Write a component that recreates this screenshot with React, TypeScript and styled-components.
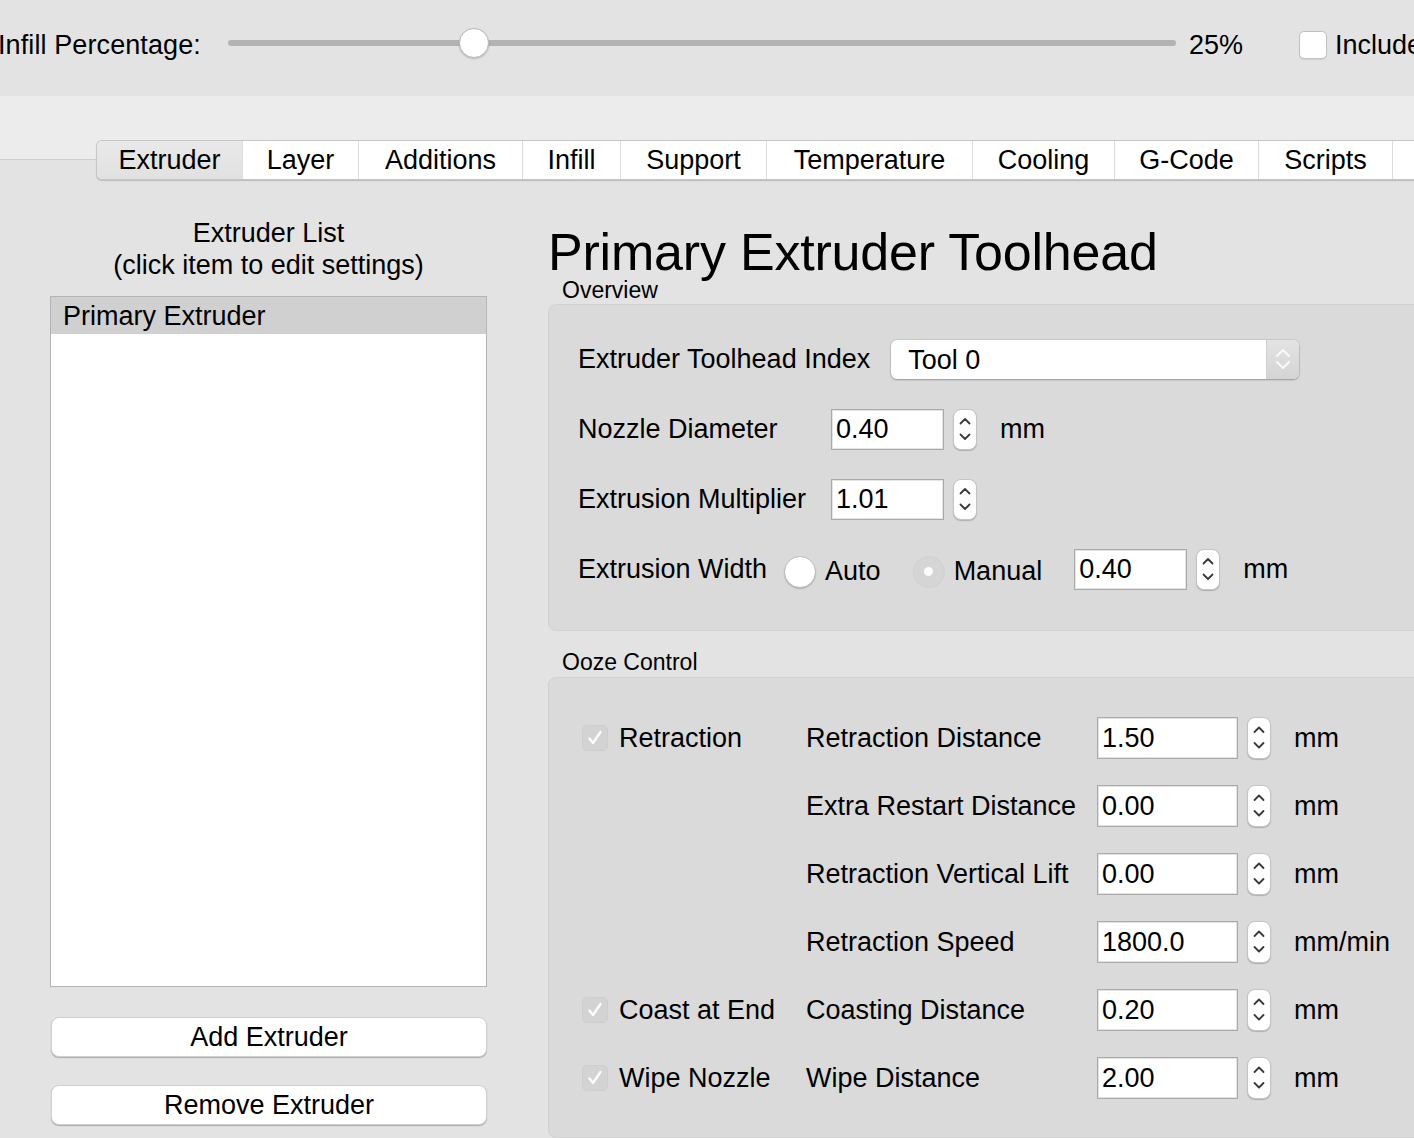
import styled, { createGlobalStyle } from "styled-components";

const GlobalCSS = createGlobalStyle`
  html, body {
    margin: 0;
    padding: 0;
    background: #e3e3e3;
  }
  body {
    font-family: "Liberation Sans", Arial, sans-serif;
    color: #000;
  }
  * {
    box-sizing: border-box;
  }
`;

const Window = styled.div`
  width: 1414px;
  height: 1138px;
  overflow: hidden;
  background: #e3e3e3;
  display: flex;
  flex-direction: column;
`;

/* ---------- top strip ---------- */

const TopBar = styled.div`
  height: 96px;
  flex-shrink: 0;
  display: flex;
  align-items: center;
  padding-bottom: 6px;
  font-size: 27px;
  white-space: nowrap;
`;

const InfillLabel = styled.span`
  margin-left: -2px;
  letter-spacing: 0.1px;
`;

const SliderTrack = styled.div`
  position: relative;
  flex-shrink: 0;
  width: 948px;
  height: 6px;
  margin-left: 27px;
  margin-top: -4px;
  border-radius: 3px;
  background: #b3b3b3;
`;

const SliderKnob = styled.div<{ $at: number }>`
  position: absolute;
  top: 50%;
  left: ${({ $at }) => $at}%;
  width: 30px;
  height: 30px;
  border-radius: 50%;
  background: #fff;
  border: 1px solid #bababa;
  box-shadow: 0 1px 2px rgba(0, 0, 0, 0.2);
  transform: translate(-50%, -50%);
`;

const Percent = styled.span`
  margin-left: 13px;
`;

const TopCheck = styled.span`
  flex-shrink: 0;
  width: 28px;
  height: 28px;
  margin-left: 56px;
  border-radius: 5px;
  background: #fff;
  border: 1px solid #c0c0c0;
  box-shadow: 0 1px 1px rgba(0, 0, 0, 0.08);
`;

const TopCheckLabel = styled.span`
  margin-left: 8px;
`;

/* ---------- tabs ---------- */

const Band = styled.div`
  height: 64px;
  flex-shrink: 0;
  background: #ececec;
  border-bottom: 1px solid #cfcfcf;
`;

const TabBar = styled.div`
  align-self: flex-start;
  flex-shrink: 0;
  display: flex;
  height: 40px;
  margin-top: -20px;
  margin-left: 96px;
  background: #fff;
  border: 1px solid #c6c6c6;
  border-right: none;
  border-radius: 6px 0 0 6px;
  box-shadow: 0 1px 1px rgba(0, 0, 0, 0.18);
  overflow: hidden;
`;

const Tab = styled.div<{ $w: number; $active?: boolean }>`
  width: ${({ $w }) => $w}px;
  flex-shrink: 0;
  display: flex;
  align-items: center;
  justify-content: center;
  font-size: 27px;
  white-space: nowrap;
  border-right: 1px solid #dcdcdc;
  background: ${({ $active }) =>
    $active ? "linear-gradient(#e9e9e9, #e1e1e1)" : "#fff"};
`;

/* ---------- body ---------- */

const Body = styled.div`
  flex: 1;
  min-height: 0;
  display: flex;
`;

const LeftColumn = styled.div`
  width: 437px;
  flex-shrink: 0;
  margin-left: 50px;
  padding-top: 37px;
  display: flex;
  flex-direction: column;
`;

const ListCaption = styled.div`
  text-align: center;
  font-size: 27px;
  line-height: 32px;
`;

const ListBox = styled.div`
  height: 691px;
  margin-top: 15px;
  background: #fff;
  border: 1px solid #b4b4b4;
`;

const ListItem = styled.div<{ $selected?: boolean }>`
  height: 37px;
  padding-left: 12px;
  font-size: 27px;
  line-height: 39px;
  background: ${({ $selected }) => ($selected ? "#d0d0d0" : "transparent")};
`;

const PushButton = styled.div<{ $gap: number }>`
  height: 40px;
  margin-top: ${({ $gap }) => $gap}px;
  margin-left: 1px;
  display: flex;
  align-items: center;
  justify-content: center;
  font-size: 27px;
  background: #fff;
  border-radius: 8px;
  border: 1px solid #d0d0d0;
  box-shadow: 0 1px 1px rgba(0, 0, 0, 0.25);
`;

const RightColumn = styled.div`
  flex: 1;
  min-width: 0;
  margin-left: 61px;
  padding-top: 44px;
  display: flex;
  flex-direction: column;
`;

const Title = styled.h1`
  margin: 0;
  font-size: 52px;
  font-weight: normal;
  line-height: 56px;
  white-space: nowrap;
  letter-spacing: -0.2px;
`;

const GroupLabel = styled.div<{ $top: number }>`
  margin-top: ${({ $top }) => $top}px;
  margin-left: 14px;
  font-size: 23px;
  line-height: 20px;
`;

const GroupBox = styled.div<{ $top: number }>`
  width: 920px;
  margin-top: ${({ $top }) => $top}px;
  background: #dadada;
  border: 1px solid #d2d2d2;
  border-radius: 8px;
`;

const OverviewBox = styled(GroupBox)`
  display: flex;
  flex-direction: column;
  gap: 30px;
  padding: 34px 0 41px 29px;
`;

const FormRow = styled.div`
  display: flex;
  align-items: center;
  height: 40px;
  font-size: 27px;
  white-space: nowrap;
`;

const FieldLabel = styled.span<{ $w?: number }>`
  flex-shrink: 0;
  ${({ $w }) => ($w ? `width: ${$w}px;` : "")}
`;

const ComboBox = styled.div`
  display: flex;
  width: 408px;
  height: 39px;
  margin-left: 21px;
  background: #fff;
  border-radius: 6px;
  box-shadow: 0 0 0 1px rgba(0, 0, 0, 0.07), 0 1px 2px rgba(0, 0, 0, 0.25);
`;

const ComboText = styled.span`
  flex: 1;
  display: flex;
  align-items: center;
  padding-left: 17px;
  padding-top: 3px;
  font-size: 27px;
`;

const ComboArrows = styled.span`
  width: 33px;
  display: flex;
  align-items: center;
  justify-content: center;
  background: linear-gradient(#e3e3e3, #d4d4d4);
  border-left: 1px solid #d0d0d0;
  border-radius: 0 6px 6px 0;
`;

const SpinWrap = styled.span<{ $left?: number }>`
  display: flex;
  align-items: center;
  margin-left: ${({ $left }) => $left ?? 0}px;
`;

const SpinField = styled.span<{ $w: number; $h: number }>`
  width: ${({ $w }) => $w}px;
  height: ${({ $h }) => $h}px;
  display: flex;
  align-items: center;
  padding-left: 4px;
  font-size: 27px;
  background: #fff;
  border: 1px solid #a9a9a9;
  box-shadow: inset 0 0 0 1px #e4e4e4;
`;

const Stepper = styled.span<{ $h: number }>`
  width: 24px;
  height: ${({ $h }) => $h}px;
  margin-left: 9px;
  display: flex;
  background: #fff;
  border: 1px solid #c4c4c4;
  border-radius: 8px;
  box-shadow: 0 1px 1px rgba(0, 0, 0, 0.2);
`;

const Unit = styled.span`
  margin-left: 23px;
  font-size: 27px;
  white-space: nowrap;
`;

const Radio = styled.span<{ $left: number; $disabled?: boolean }>`
  flex-shrink: 0;
  width: 32px;
  height: 32px;
  margin-left: ${({ $left }) => $left}px;
  margin-top: 5px;
  display: flex;
  align-items: center;
  justify-content: center;
  border-radius: 50%;
  background: ${({ $disabled }) => ($disabled ? "#d5d5d5" : "#fff")};
  border: 1px solid ${({ $disabled }) => ($disabled ? "#d1d1d1" : "#bdbdbd")};
  box-shadow: ${({ $disabled }) =>
    $disabled ? "none" : "0 1px 1px rgba(0, 0, 0, 0.2)"};
`;

const RadioDot = styled.span`
  width: 9px;
  height: 9px;
  border-radius: 50%;
  background: #fbfbfb;
`;

const RadioLabel = styled.span`
  margin-left: 9px;
  margin-top: 5px;
`;

const OozeBox = styled(GroupBox)`
  flex: 1;
  display: grid;
  grid-template-columns: 224px 291px max-content max-content;
  justify-content: start;
  grid-auto-rows: 42px;
  row-gap: 26px;
  align-items: center;
  align-content: start;
  padding: 39px 0 0 33px;
  font-size: 27px;
  white-space: nowrap;
`;

const CheckCell = styled.span`
  display: flex;
  align-items: center;
`;

const DisabledCheck = styled.span`
  width: 26px;
  height: 26px;
  display: flex;
  border-radius: 5px;
  background: #d3d3d3;
  border: 1px solid #cecece;
`;

const CheckLabel = styled.span`
  margin-left: 11px;
`;

/* ---------- small drawings ---------- */

const StepArrows = ({ h }: { h: number }) => (
  <svg width="22" height={h - 2} viewBox={`0 0 22 ${h - 2}`}>
    <polyline
      points={`6.5,${h / 2 - 7} 11,${h / 2 - 11.5} 15.5,${h / 2 - 7}`}
      fill="none"
      stroke="#3a3a3a"
      strokeWidth="1.8"
      strokeLinecap="round"
      strokeLinejoin="round"
    />
    <polyline
      points={`6.5,${h / 2 + 4} 11,${h / 2 + 8.5} 15.5,${h / 2 + 4}`}
      fill="none"
      stroke="#3a3a3a"
      strokeWidth="1.8"
      strokeLinecap="round"
      strokeLinejoin="round"
    />
  </svg>
);

const ComboChevrons = () => (
  <svg width="20" height="28" viewBox="0 0 20 28">
    <polyline
      points="4,11 10,5 16,11"
      fill="none"
      stroke="#fafafa"
      strokeWidth="2"
      strokeLinecap="round"
      strokeLinejoin="round"
    />
    <polyline
      points="4,17 10,23 16,17"
      fill="none"
      stroke="#fafafa"
      strokeWidth="2"
      strokeLinecap="round"
      strokeLinejoin="round"
    />
  </svg>
);

const CheckMark = () => (
  <svg width="24" height="24" viewBox="0 0 24 24">
    <path
      d="M6.5 12.5 L10 17 L17.5 6"
      fill="none"
      stroke="#fdfdfd"
      strokeWidth="2.4"
      strokeLinecap="round"
      strokeLinejoin="round"
    />
  </svg>
);

const SpinBox = ({
  value,
  w,
  h,
  left,
}: {
  value: string;
  w: number;
  h: number;
  left?: number;
}) => (
  <SpinWrap $left={left}>
    <SpinField $w={w} $h={h}>
      {value}
    </SpinField>
    <Stepper $h={h}>
      <StepArrows h={h} />
    </Stepper>
  </SpinWrap>
);

/* ---------- data ---------- */

const tabs = [
  { name: "Extruder", w: 146 },
  { name: "Layer", w: 116 },
  { name: "Additions", w: 164 },
  { name: "Infill", w: 98 },
  { name: "Support", w: 146 },
  { name: "Temperature", w: 206 },
  { name: "Cooling", w: 142 },
  { name: "G-Code", w: 144 },
  { name: "Scripts", w: 134 },
  { name: "Speeds", w: 170 },
];

const oozeRows = [
  { check: "Retraction", label: "Retraction Distance", value: "1.50", unit: "mm" },
  { label: "Extra Restart Distance", value: "0.00", unit: "mm" },
  { label: "Retraction Vertical Lift", value: "0.00", unit: "mm" },
  { label: "Retraction Speed", value: "1800.0", unit: "mm/min" },
  { check: "Coast at End", label: "Coasting Distance", value: "0.20", unit: "mm" },
  { check: "Wipe Nozzle", label: "Wipe Distance", value: "2.00", unit: "mm" },
];

export default function App() {
  return (
    <>
      <GlobalCSS />
      <Window>
        <TopBar>
          <InfillLabel>Infill Percentage:</InfillLabel>
          <SliderTrack>
            <SliderKnob $at={26} />
          </SliderTrack>
          <Percent>25%</Percent>
          <TopCheck />
          <TopCheckLabel>Include solid diaphragm every</TopCheckLabel>
        </TopBar>

        <Band />
        <TabBar>
          {tabs.map((t, i) => (
            <Tab key={t.name} $w={t.w} $active={i === 0}>
              {t.name}
            </Tab>
          ))}
        </TabBar>

        <Body>
          <LeftColumn>
            <ListCaption>
              Extruder List
              <br />
              (click item to edit settings)
            </ListCaption>
            <ListBox>
              <ListItem $selected>Primary Extruder</ListItem>
            </ListBox>
            <PushButton $gap={30}>Add Extruder</PushButton>
            <PushButton $gap={28}>Remove Extruder</PushButton>
          </LeftColumn>

          <RightColumn>
            <Title>Primary Extruder Toolhead</Title>
            <GroupLabel $top={0}>Overview</GroupLabel>
            <OverviewBox $top={4}>
              <FormRow>
                <FieldLabel>Extruder Toolhead Index</FieldLabel>
                <ComboBox>
                  <ComboText>Tool 0</ComboText>
                  <ComboArrows>
                    <ComboChevrons />
                  </ComboArrows>
                </ComboBox>
              </FormRow>
              <FormRow>
                <FieldLabel $w={253}>Nozzle Diameter</FieldLabel>
                <SpinBox value="0.40" w={113} h={41} />
                <Unit>mm</Unit>
              </FormRow>
              <FormRow>
                <FieldLabel $w={253}>Extrusion Multiplier</FieldLabel>
                <SpinBox value="1.01" w={113} h={41} />
              </FormRow>
              <FormRow>
                <FieldLabel>Extrusion Width</FieldLabel>
                <Radio $left={17} />
                <RadioLabel>Auto</RadioLabel>
                <Radio $left={32} $disabled>
                  <RadioDot />
                </Radio>
                <RadioLabel>Manual</RadioLabel>
                <SpinBox value="0.40" w={113} h={41} left={32} />
                <Unit>mm</Unit>
              </FormRow>
            </OverviewBox>

            <GroupLabel $top={21}>Ooze Control</GroupLabel>
            <OozeBox $top={5}>
              {oozeRows.map((r) => [
                <CheckCell key={r.label + "c"}>
                  {r.check && (
                    <>
                      <DisabledCheck>
                        <CheckMark />
                      </DisabledCheck>
                      <CheckLabel>{r.check}</CheckLabel>
                    </>
                  )}
                </CheckCell>,
                <span key={r.label + "l"}>{r.label}</span>,
                <SpinBox key={r.label + "s"} value={r.value} w={141} h={42} />,
                <Unit key={r.label + "u"}>{r.unit}</Unit>,
              ])}
            </OozeBox>
          </RightColumn>
        </Body>
      </Window>
    </>
  );
}
